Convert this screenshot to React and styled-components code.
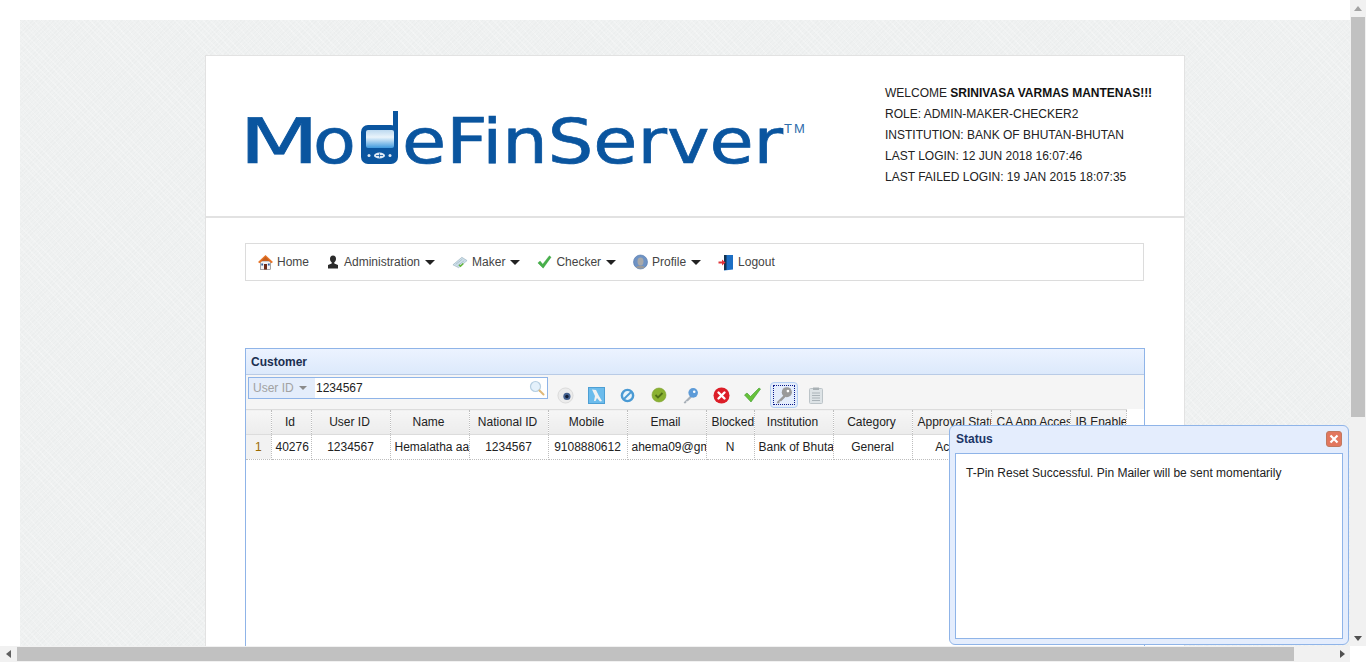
import React from 'react';
import styled, { createGlobalStyle } from 'styled-components';

const columns = [
  { label: 'Id', value: '40276', width: 40 },
  { label: 'User ID', value: '1234567', width: 79 },
  { label: 'Name', value: 'Hemalatha aaaaa', width: 79, left: true },
  { label: 'National ID', value: '1234567', width: 79 },
  { label: 'Mobile', value: '9108880612', width: 79 },
  { label: 'Email', value: 'ahema09@gmail.com', width: 79, left: true },
  { label: 'Blocked', value: 'N', width: 48 },
  { label: 'Institution', value: 'Bank of Bhutan', width: 79, left: true },
  { label: 'Category', value: 'General', width: 79 },
  { label: 'Approval Status', value: 'Active', width: 79 },
  { label: 'CA App Access', value: '', width: 79 },
  { label: 'IB Enabled', value: '', width: 56 },
];

const infoLines = [
  ['WELCOME ', 'SRINIVASA VARMAS MANTENAS!!!'],
  ['ROLE: ADMIN-MAKER-CHECKER2'],
  ['INSTITUTION: BANK OF BHUTAN-BHUTAN'],
  ['LAST LOGIN: 12 JUN 2018 16:07:46'],
  ['LAST FAILED LOGIN: 19 JAN 2015 18:07:35'],
];

const HomeIcon = () => (
  <svg width="15" height="16" viewBox="0 0 15 16">
    <rect x="2.500" y="7" width="10" height="8.500" fill="#f4f4f4" stroke="#6f6f6f" strokeWidth="0.6" />
    <path d="M0 8 7.500 1 15 8l-1.500 1.200L7.500 4.500 1.500 9.200z" fill="#e8762b" />
    <path d="M7.500 2.500 12 7H3z" fill="#c9601d" />
    <rect x="6" y="10" width="3" height="5.500" fill="#6a2a17" />
    <rect x="3.300" y="9.500" width="1.800" height="2" fill="#2f5f9a" />
    <rect x="9.900" y="9.500" width="1.800" height="2" fill="#2f5f9a" />
  </svg>
);

const PersonIcon = () => (
  <svg width="14" height="16" viewBox="0 0 14 16">
    <path d="M7 1.500c2 0 3 1.400 3 3.200 0 1.700-.8 3-1.700 3.600v1.200l3.700 1.600v3.400H2v-3.400l3.700-1.600V8.300C4.800 7.700 4 6.400 4 4.700 4 2.900 5 1.500 7 1.500z" fill="#2b2b2b" />
  </svg>
);

const MakerIcon = () => (
  <svg width="16" height="16" viewBox="0 0 17 16">
    <path d="M1 11 10.500 3 16 6.500 7 14z" fill="#cfe0ea" stroke="#8fa9b8" strokeWidth="0.6" />
    <path d="M4 10.500 11 5M6 12 13 6.500" stroke="#8fa9b8" strokeWidth="0.6" />
    <path d="m7.500 11 1.500 1.500 3-3" fill="none" stroke="#63b53a" strokeWidth="1.600" />
  </svg>
);

const CheckMark = () => (
  <svg width="15" height="16" viewBox="0 0 17 17">
    <path d="M1 9.500 3.500 7.500 6.500 11 14 1.500 16 3 7 15.500z" fill="#48b04a" stroke="#2f9a3a" strokeWidth="0.4" />
  </svg>
);

const ProfileIcon = () => (
  <svg width="15" height="16" viewBox="0 0 15 16">
    <circle cx="7.500" cy="8" r="7" fill="#6f93c4" stroke="#4f75ab" strokeWidth="0.6" />
    <ellipse cx="7.500" cy="7.500" rx="3" ry="4" fill="#a9a9a9" />
    <path d="M3 13.500c1-2.500 8-2.500 9 0-2 1.500-7 1.500-9 0z" fill="#9a9a9a" />
  </svg>
);

const LogoutIcon = () => (
  <svg width="16" height="17" viewBox="0 0 16 17">
    <path d="M6 1h9v14.500L6 16.500z" fill="#1d6fc4" />
    <path d="M6 1h2.500v15H6z" fill="#13324f" />
    <path d="M0.500 7.500H4V5.500L7.500 8.500 4 11.500V9.500H0.500z" fill="#e0353a" />
  </svg>
);

const SearchIcon = () => (
  <svg width="16" height="16" viewBox="0 0 16 16">
    <circle cx="6.500" cy="6.500" r="5" fill="#e4f1fb" stroke="#b6cfe2" strokeWidth="1.200" />
    <path d="m10.500 10.500 4 4" stroke="#e0b878" strokeWidth="2" strokeLinecap="round" />
  </svg>
);

const EyeTool = () => (
  <svg width="17" height="17" viewBox="0 0 18 18">
    <circle cx="9" cy="9" r="8" fill="#ececec" stroke="#c9c9c9" strokeWidth="0.6" />
    <circle cx="10.500" cy="10" r="3.800" fill="#44618f" />
    <circle cx="10.500" cy="10" r="1.800" fill="#101c33" />
  </svg>
);

const FigureTool = () => (
  <svg width="17" height="17" viewBox="0 0 17 17">
    <rect x="0.500" y="0.500" width="16" height="16" fill="#6cbcec" stroke="#4d9fd4" />
    <path d="M4 2.500 8 3 11 9l3 5-2 .5L9 11l-1.500 3H6l1-5z" fill="#f2f2f2" />
  </svg>
);

const BanTool = () => (
  <svg width="15" height="15" viewBox="0 0 16 16">
    <circle cx="8" cy="8" r="6" fill="#e8f4fb" stroke="#4a9ad4" strokeWidth="2.600" />
    <path d="m4.500 11.500 7-7" stroke="#4a9ad4" strokeWidth="2" />
  </svg>
);

const OkTool = () => (
  <svg width="16" height="16" viewBox="0 0 16 16">
    <circle cx="8" cy="8" r="7" fill="#8ab132" stroke="#7aa02a" strokeWidth="0.6" />
    <path d="m4.500 8 2.500 2.500L11.500 6" fill="none" stroke="#4f6f18" strokeWidth="1.800" />
  </svg>
);

const KeyTool = ({ head = '#5d9bd8', shaft = '#a8b0b8', size = 17 }) => (
  <svg width={size} height={size} viewBox="0 0 16 16">
    <path d="m8 8-6.500 6.500L2.500 15.500 4 15V13.500h1.500L9.500 9.500z" fill={shaft} />
    <circle cx="10.500" cy="5.500" r="4.500" fill={head} />
    <circle cx="11.500" cy="4.500" r="1.200" fill="#fff" />
  </svg>
);

const RedXTool = () => (
  <svg width="17" height="17" viewBox="0 0 17 17">
    <circle cx="8.500" cy="8.500" r="8" fill="#dc1e28" />
    <path d="m5.500 5.500 6 6m0-6-6 6" stroke="#fff" strokeWidth="2.400" strokeLinecap="round" />
  </svg>
);

const GreenTickTool = () => (
  <svg width="17" height="16" viewBox="0 0 17 16">
    <path d="M0.500 8 3 6 6.500 9.500 15 1l1.500 1L7 15z" fill="#67c23a" stroke="#3d9a2c" strokeWidth="0.6" />
  </svg>
);

const ClipboardTool = () => (
  <svg width="14" height="17" viewBox="0 0 14 17">
    <rect x="0.500" y="1.500" width="13" height="15" rx="1" fill="#dde3e6" stroke="#bcc4c8" />
    <rect x="4" y="0.500" width="6" height="2.500" fill="#a9b1b5" />
    <path d="M3 6h8M3 8.500h8M3 11h8M3 13.500h8" stroke="#aab3b8" />
  </svg>
);

const PhoneD = () => (
  <svg width="37" height="53" viewBox="0 0 37 53">
    <defs>
      <linearGradient id="screen" x1="0" y1="0" x2="0" y2="1">
        <stop offset="0" stopColor="#bcd9f0" />
        <stop offset="0.4" stopColor="#eaf4fb" />
        <stop offset="1" stopColor="#3f9ade" />
      </linearGradient>
    </defs>
    <rect x="32" y="0" width="5" height="22" fill="#0a559f" />
    <rect x="0" y="14" width="37" height="39" rx="7" fill="#0a559f" />
    <rect x="5" y="19" width="28" height="18" rx="2" fill="url(#screen)" />
    <circle cx="8" cy="44.500" r="1.500" fill="#dfeaf5" />
    <circle cx="29" cy="44.500" r="1.500" fill="#dfeaf5" />
    <ellipse cx="18.500" cy="44.500" rx="5.500" ry="3" fill="#dfeaf5" />
    <path d="M15 44.500h7M18.500 42.500v4" stroke="#0a559f" strokeWidth="0.8" />
  </svg>
);

const Triangle = ({ dir, color }) => {
  const points = {
    up: '4,1 8,6 0,6',
    down: '0,2 8,2 4,7',
    left: '6,0 6,8 1,4',
    right: '2,0 2,8 7,4',
  }[dir];
  return (
    <svg width="8" height="8" viewBox="0 0 8 8">
      <polygon points={points} fill={color} />
    </svg>
  );
};

const GlobalStyle = createGlobalStyle`
  html, body {
    margin: 0;
    padding: 0;
    height: 100%;
    overflow: hidden;
    background: #fff;
  }
  body, input {
    font-family: "Liberation Sans", Arial, sans-serif;
    font-size: 12px;
  }
`;

const Shell = styled.div`
  position: relative;
  display: grid;
  grid-template-columns: 1350px 16px;
  grid-template-rows: 646px 16px;
  width: 1366px;
  height: 662px;
  overflow: hidden;
`;

const Viewport = styled.div`
  overflow: hidden;
  padding: 20px 0 0 20px;
`;

const Backdrop = styled.div`
  width: 1500px;
  height: 900px;
  padding: 35px 0 0 185px;
  box-sizing: border-box;
  background-color: #eff1f1;
  background-image:
    repeating-linear-gradient(45deg, rgba(255, 255, 255, 0.22) 0 1px, transparent 1px 5px),
    repeating-linear-gradient(135deg, rgba(205, 210, 210, 0.1) 0 1px, transparent 1px 3px),
    repeating-linear-gradient(60deg, rgba(255, 255, 255, 0.12) 0 1px, transparent 1px 7px);
`;

const Sheet = styled.div`
  width: 980px;
  height: 800px;
  box-sizing: border-box;
  background: #fff;
  border: 1px solid #e2e2e2;
`;

const Masthead = styled.header`
  display: flex;
  align-items: flex-start;
  justify-content: space-between;
  height: 162px;
  box-sizing: border-box;
  border-bottom: 2px solid #e2e2e2;
  padding-left: 42px;
`;

const Logo = styled.div`
  display: flex;
  align-items: flex-end;
  flex: none;
  height: 82px;
  margin-top: 35px;
  color: #0a559f;
  font-family: "DejaVu Sans", sans-serif;
  font-size: 62px;
  line-height: 1;
  white-space: nowrap;
`;

const LogoPart = styled.span`
  display: block;
  flex: none;
  width: ${(p) => p.$width}px;
`;

const LogoGlyphs = styled.span`
  display: block;
  margin-left: ${(p) => p.$shift}px;
  transform: scaleX(${(p) => p.$stretch});
  transform-origin: left center;
  -webkit-text-stroke: 0.7px #0a559f;
`;

const PhoneSlot = styled.span`
  display: block;
  flex: none;
  width: 45px;
  margin-bottom: 9px;
  line-height: 0;
`;

const LogoMark = styled.span`
  align-self: flex-start;
  margin-top: 31px;
  font-family: "Liberation Sans", sans-serif;
  font-size: 13px;
  letter-spacing: 2px;
  line-height: 1;
  color: #2f6dab;
`;

const Info = styled.div`
  width: 299px;
  padding-top: 27px;
`;

const InfoLine = styled.div`
  height: 21px;
  line-height: 21px;
  color: #222;
  white-space: nowrap;

  strong {
    color: #111;
  }
`;

const Content = styled.div`
  padding: 25px 0 0 39px;
`;

const NavBar = styled.nav`
  display: flex;
  align-items: center;
  gap: 17px;
  width: 899px;
  height: 38px;
  box-sizing: border-box;
  padding-left: 12px;
  border: 1px solid #dcdcdc;
  color: #444;
`;

const NavItem = styled.a`
  display: flex;
  align-items: center;
  gap: 4px;
  white-space: nowrap;

  svg {
    display: block;
  }
`;

const Caret = styled.span`
  width: 0;
  height: 0;
  margin-left: 1px;
  border-left: 5px solid transparent;
  border-right: 5px solid transparent;
  border-top: 5px solid #222;
`;

const GridPanel = styled.section`
  width: 900px;
  height: 420px;
  margin-top: 67px;
  box-sizing: border-box;
  border: 1px solid #8fb4e8;
  background: #fff;
`;

const PanelTitle = styled.div`
  height: 26px;
  line-height: 26px;
  box-sizing: border-box;
  padding-left: 5px;
  font-weight: bold;
  color: #1b2f50;
  background: linear-gradient(#ecf3ff, #dce9fb);
  border-bottom: 1px solid #b9cbe6;
`;

const Toolbar = styled.div`
  display: flex;
  align-items: flex-start;
  height: 34px;
  box-sizing: border-box;
  padding: 2px 0 0 2px;
  background: #f5f5f5;
`;

const SearchBox = styled.div`
  display: flex;
  align-items: center;
  width: 300px;
  height: 22px;
  box-sizing: border-box;
  border: 1px solid #8fb4e8;
  background: #fff;
`;

const FieldSelect = styled.div`
  display: flex;
  align-items: center;
  gap: 5px;
  width: 66px;
  height: 100%;
  box-sizing: border-box;
  padding-left: 4px;
  background: #e4edfb;
  color: #a2a2a2;

  span {
    border-left: 4px solid transparent;
    border-right: 4px solid transparent;
    border-top: 4px solid #8a8a8a;
  }
`;

const SearchInput = styled.input`
  flex: 1;
  min-width: 0;
  padding: 0 0 0 1px;
  border: 0;
  outline: 0;
  color: #222;
  background: transparent;
`;

const SearchGlass = styled.span`
  display: block;
  margin-right: 2px;
  line-height: 0;
`;

const ToolGroup = styled.div`
  display: flex;
  align-items: center;
  margin-left: 1.5px;
  margin-top: 5px;
`;

const ToolButton = styled.button`
  display: flex;
  align-items: center;
  justify-content: center;
  flex: none;
  width: 31.3px;
  height: 26px;
  padding: 0;
  background: transparent;
  border: 0;

  ${(p) =>
    p.$focused &&
    `
    position: relative;
    width: 28px;
    margin: 0 1.65px;
    background: #e4edfb;
    border: 1px solid #b4cff2;
    border-radius: 4px;
    box-sizing: border-box;
    &::after {
      content: '';
      position: absolute;
      inset: 2px;
      border: 1px dotted #0a1a8c;
    }
  `}
`;

const Table = styled.table`
  border-collapse: collapse;
  table-layout: fixed;
  width: 880px;
  color: #222;
`;

const HeadCell = styled.th`
  height: 25px;
  padding: 0 7px 0 5px;
  box-sizing: border-box;
  overflow: hidden;
  white-space: nowrap;
  font-weight: normal;
  text-align: center;
  background: linear-gradient(#f6f6f6, #ececec);
  border-top: 1px solid #dcdcdc;
  border-bottom: 1px solid #dcdcdc;
  border-right: 1px dotted #bdbdbd;
`;

const BodyCell = styled.td`
  height: 25px;
  padding: 0 4px;
  box-sizing: border-box;
  overflow: hidden;
  white-space: nowrap;
  text-align: ${(p) => (p.$left ? 'left' : 'center')};
  border-bottom: 1px dotted #bdbdbd;
  border-right: 1px dotted #bdbdbd;
`;

const RowNumber = styled(BodyCell)`
  background: #f2f2f2;
  color: #9a6a00;
`;

const StatusDialog = styled.aside`
  position: absolute;
  left: 949px;
  top: 425px;
  display: flex;
  flex-direction: column;
  width: 400px;
  height: 220px;
  box-sizing: border-box;
  padding: 0 5px 5px;
  background: #e4edfd;
  border: 1px solid #8fb4e8;
  border-radius: 6px;
`;

const DialogHead = styled.div`
  display: flex;
  align-items: center;
  justify-content: space-between;
  flex: none;
  height: 25px;
  padding: 0 1px 2px;
  font-weight: bold;
  color: #1b3566;
`;

const CloseButton = styled.button`
  display: flex;
  align-items: center;
  justify-content: center;
  width: 16px;
  height: 16px;
  padding: 0;
  background: #e2775e;
  border: 1px solid #c0795f;
  border-radius: 3px;
`;

const DialogBody = styled.div`
  flex: 1;
  padding: 12px 10px;
  background: #fff;
  border: 1px solid #8fb4e8;
  color: #222;
`;

const VBar = styled.div`
  display: flex;
  flex-direction: column;
  background: #f1f1f1;
`;

const HBar = styled.div`
  display: flex;
  background: #f1f1f1;
`;

const ArrowBox = styled.div`
  display: flex;
  align-items: center;
  justify-content: center;
  flex: none;
  width: ${(p) => (p.$vertical ? '16px' : '17px')};
  height: ${(p) => (p.$vertical ? '17px' : '16px')};
`;

const Track = styled.div`
  flex: 1;
  display: flex;
  flex-direction: ${(p) => (p.$vertical ? 'column' : 'row')};
  padding: ${(p) => (p.$vertical ? '0 1px' : '1px 0')};
`;

const Thumb = styled.div`
  flex: none;
  background: #c1c1c1;
  ${(p) => (p.$vertical ? `height: ${p.$size}px;` : `width: ${p.$size}px;`)}
`;

export default function App() {
  const tools = [
    <EyeTool />,
    <FigureTool />,
    <BanTool />,
    <OkTool />,
    <KeyTool />,
    <RedXTool />,
    <GreenTickTool />,
    <KeyTool head="#9a9a9a" shaft="#9a9a9a" size={18} />,
    <ClipboardTool />,
  ];

  return (
    <>
      <GlobalStyle />
      <Shell>
        <Viewport>
          <Backdrop>
            <Sheet>
              <Masthead>
                <Logo>
                  <LogoPart $width={69}><LogoGlyphs $shift={-9} $stretch={1.5}>M</LogoGlyphs></LogoPart>
                  <LogoPart $width={44}><LogoGlyphs $shift={-4} $stretch={1.13}>o</LogoGlyphs></LogoPart>
                  <PhoneSlot><PhoneD /></PhoneSlot>
                  <LogoPart $width={378}><LogoGlyphs $shift={-4} $stretch={1.158}>eFinServer</LogoGlyphs></LogoPart>
                  <LogoMark>TM</LogoMark>
                </Logo>
                <Info>
                  {infoLines.map(([text, bold]) => (
                    <InfoLine key={text}>
                      {text}
                      {bold && <strong>{bold}</strong>}
                    </InfoLine>
                  ))}
                </Info>
              </Masthead>
              <Content>
                <NavBar>
                  <NavItem><HomeIcon />Home</NavItem>
                  <NavItem><PersonIcon />Administration<Caret /></NavItem>
                  <NavItem><MakerIcon />Maker<Caret /></NavItem>
                  <NavItem><CheckMark />Checker<Caret /></NavItem>
                  <NavItem><ProfileIcon />Profile<Caret /></NavItem>
                  <NavItem><LogoutIcon />Logout</NavItem>
                </NavBar>
                <GridPanel>
                  <PanelTitle>Customer</PanelTitle>
                  <Toolbar>
                    <SearchBox>
                      <FieldSelect>User ID<span /></FieldSelect>
                      <SearchInput defaultValue="1234567" />
                      <SearchGlass><SearchIcon /></SearchGlass>
                    </SearchBox>
                    <ToolGroup>
                      {tools.map((tool, i) => (
                        <ToolButton key={i} $focused={i === 7}>{tool}</ToolButton>
                      ))}
                    </ToolGroup>
                  </Toolbar>
                  <Table>
                    <colgroup>
                      <col style={{ width: 25 }} />
                      {columns.map((c) => <col key={c.label} style={{ width: c.width }} />)}
                    </colgroup>
                    <thead>
                      <tr>
                        <HeadCell />
                        {columns.map((c) => <HeadCell key={c.label}>{c.label}</HeadCell>)}
                      </tr>
                    </thead>
                    <tbody>
                      <tr>
                        <RowNumber>1</RowNumber>
                        {columns.map((c) => (
                          <BodyCell key={c.label} $left={c.left}>{c.value}</BodyCell>
                        ))}
                      </tr>
                    </tbody>
                  </Table>
                </GridPanel>
              </Content>
            </Sheet>
          </Backdrop>
        </Viewport>
        <VBar>
          <ArrowBox $vertical><Triangle dir="up" color="#a3a3a3" /></ArrowBox>
          <Track $vertical><Thumb $vertical $size={400} /></Track>
          <ArrowBox $vertical><Triangle dir="down" color="#505050" /></ArrowBox>
        </VBar>
        <HBar>
          <ArrowBox><Triangle dir="left" color="#606060" /></ArrowBox>
          <Track><Thumb $size={1277} /></Track>
          <ArrowBox><Triangle dir="right" color="#505050" /></ArrowBox>
        </HBar>
        <div />
        <StatusDialog>
          <DialogHead>
            Status
            <CloseButton>
              <svg width="10" height="10" viewBox="0 0 10 10">
                <path d="m1.500 1.500 7 7m0-7-7 7" stroke="#fff" strokeWidth="2.200" />
              </svg>
            </CloseButton>
          </DialogHead>
          <DialogBody>T-Pin Reset Successful. Pin Mailer will be sent momentarily</DialogBody>
        </StatusDialog>
      </Shell>
    </>
  );
}
